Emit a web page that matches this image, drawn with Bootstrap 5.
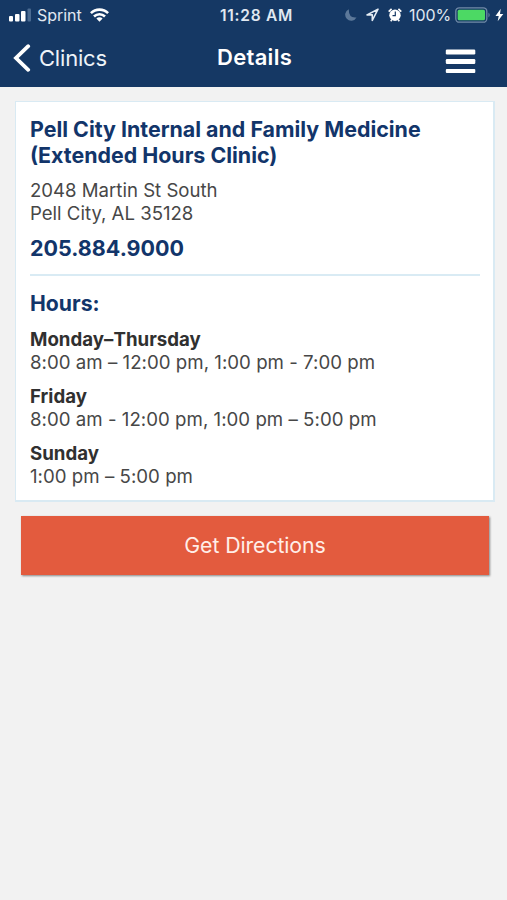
<!DOCTYPE html>
<html lang="en">
<head>
<meta charset="utf-8">
<meta name="viewport" content="width=device-width, initial-scale=1">
<title>Details</title>
<link href="https://cdn.jsdelivr.net/npm/bootstrap@5.3.0/dist/css/bootstrap.min.css" rel="stylesheet">
<style>
body { font-family: Inter, "Liberation Sans", sans-serif; background: #f2f2f2; color: #474747; min-height: 900px; }
.app-head { background: #153864; height: 87px; color: #fff; }
.status { height: 30px; padding-left: 8px; font-size: 16px; line-height: 30px; color: #e0e8f1; }
.status svg, .bar svg { display: block; flex: none; }
.status-left { width: 212px; }
.carrier { width: 47px; margin: 0 6px 0 6px; letter-spacing: -.03px; }
.clock { width: 120px; font-weight: 600; font-size: 15.5px; letter-spacing: .75px; padding-top: 1px; }
.percent { width: 43px; margin-left: 7px; letter-spacing: -.1px; }
.moon { margin-left: 4px; }
.status-icon { margin-left: 9px; }
.battery, .bolt { margin-left: 3px; }
.bar { height: 57px; padding: 0 31px 2px 13px; }
.back { width: 150px; font-size: 22px; letter-spacing: -.2px; color: #eef3f8; }
.back span { padding-top: 1px; }
.page-title { font-size: 22px; font-weight: 600; letter-spacing: .3px; margin-left: 54px; }
.info { margin: 14px 12px 0 15px; height: 401px; border: 1px solid #d9eaf3; border-width: 1px 2px 2px 1px; padding: 14px 13px 0 14px; }
.brand-text { color: #12356a; font-weight: 700; }
.clinic { font-size: 21.4px; line-height: 26px; }
.address { font-size: 18.6px; line-height: 23.3px; margin-top: 11px; }
.phone { font-size: 21.5px; line-height: 26px; margin-top: 9.400px; }
.rule { border-top: 2px solid #d9ebf4; margin: 13px 0 14px; }
.hours-title { font-size: 21.2px; line-height: 26px; }
.slot { font-size: 18.65px; line-height: 23px; margin-top: 11px; letter-spacing: .03px; }
.hours-title + .slot { margin-top: 12.2px; }
.slot strong { color: #303030; font-weight: 700; display: block; }
.go { margin: 14px 18px 0 21px; height: 59px; background: #e35b3e; color: #ffeee8; font-size: 21.3px; letter-spacing: -.1px; box-shadow: 1px 1px 2px rgba(0,0,0,.45); }
.go:hover { background: #d95539; color: #fff; }
</style>
<script src="https://cdn.jsdelivr.net/npm/bootstrap@5.3.0/dist/js/bootstrap.bundle.min.js"></script>
</head>
<body>
<header class="app-head">
  <div class="status d-flex align-items-center text-nowrap">
    <div class="status-left d-flex align-items-center">
      <svg width="23" height="14" viewBox="0 0 23 14"><g fill="#fff"><rect x="1" y="8" width="4" height="5.5" rx="1"/><rect x="7" y="6" width="4.500" height="7.500" rx="1"/><rect x="13" y="3" width="4.500" height="10.500" rx="1"/></g><rect x="19.500" y="0.500" width="3.500" height="13" rx="1" fill="#4b6b91"/></svg>
      <span class="carrier">Sprint</span>
      <svg width="19" height="14" viewBox="0 0 19 14" fill="none" stroke="#fff" stroke-width="2.600"><path d="M.9 5.200a12.200 12.200 0 0 1 17.200 0M4 8.500a7.800 7.800 0 0 1 11 0"/><path d="M6.400 10.600a4.400 4.400 0 0 1 6.200 0L9.500 13.700z" fill="#fff" stroke="none"/></svg>
    </div>
    <span class="clock">11:28 AM</span>
    <svg class="moon" width="13" height="14" viewBox="0 0 13 14"><path d="M4.800 1.200A6 6 0 1 0 12.500 9.500Q4.500 10.500 4.800 1.200z" fill="#5c7899"/></svg>
    <svg class="status-icon" width="13" height="14" viewBox="0 0 13 14" fill="none" stroke="#e4ecf4" stroke-width="1.600" stroke-linejoin="round"><path d="M12 1.200 1 6.900h5.300v5.600z"/></svg>
    <svg class="status-icon" width="14" height="14" viewBox="0 0 14 14"><circle cx="7" cy="7.300" r="5.700" fill="#fff"/><path d="M.7 3.600 3.600.9M13.300 3.600 10.400.9M2.700 13.200l1-1.200M11.300 13.200l-1-1.200" stroke="#fff" stroke-width="1.700"/><path d="M7.300 3.600v4H4.500" fill="none" stroke="#153864" stroke-width="1.200"/></svg>
    <span class="percent">100%</span>
    <svg class="battery" width="37" height="16" viewBox="0 0 37 16"><rect x=".8" y=".8" width="31" height="14.400" rx="3.500" fill="none" stroke="#718ba7" stroke-width="1.300"/><rect x="2.700" y="2.700" width="27.300" height="10.600" rx="1.500" fill="#4cd964"/><path d="M33.500 5.500q2.300 2.500 0 5z" fill="#718ba7"/></svg>
    <svg class="bolt" width="9" height="14" viewBox="0 0 9 14"><path d="M5.700.8.5 8h3.200l-1 5.300L8.300 6H5z" fill="#fff"/></svg>
  </div>
  <nav class="bar d-flex align-items-center">
    <a href="#" class="back d-flex align-items-center text-decoration-none"><svg width="18" height="28" viewBox="0 0 18 28" fill="none" stroke="#fff" stroke-width="3.800" stroke-linecap="round"><path d="M15.200 2.200 3 14l12.200 11.800"/></svg><span class="ms-2">Clinics</span></a>
    <span class="page-title">Details</span>
    <button class="border-0 bg-transparent p-0 mt-2 ms-auto" aria-label="Menu"><svg width="31" height="25" viewBox="0 0 31 25" fill="#fff"><rect x=".8" y=".5" width="29.500" height="5" rx="1.200"/><rect x=".8" y="10" width="29.500" height="5" rx="1.200"/><rect x=".8" y="20" width="29.500" height="4" rx="1"/></svg></button>
  </nav>
</header>
<main>
  <section class="info bg-white text-nowrap">
    <h1 class="clinic brand-text mb-0"><span>Pell City Internal and Family Medicine</span><br><span>(Extended Hours Clinic)</span></h1>
    <address class="address mb-0"><span>2048 Martin St South</span><br><span>Pell City, AL 35128</span></address>
    <div class="phone brand-text"><span>205.884.9000</span></div>
    <div class="rule"></div>
    <h2 class="hours-title brand-text mb-0">Hours:</h2>
    <div class="slot"><strong>Monday–Thursday</strong><span>8:00 am – 12:00 pm, 1:00 pm - 7:00 pm</span></div>
    <div class="slot"><strong>Friday</strong><span>8:00 am - 12:00 pm, 1:00 pm – 5:00 pm</span></div>
    <div class="slot"><strong>Sunday</strong><span>1:00 pm – 5:00 pm</span></div>
  </section>
  <a href="#" class="go btn rounded-0 border-0 p-0 d-flex align-items-center justify-content-center">Get Directions</a>
</main>
</body>
</html>
